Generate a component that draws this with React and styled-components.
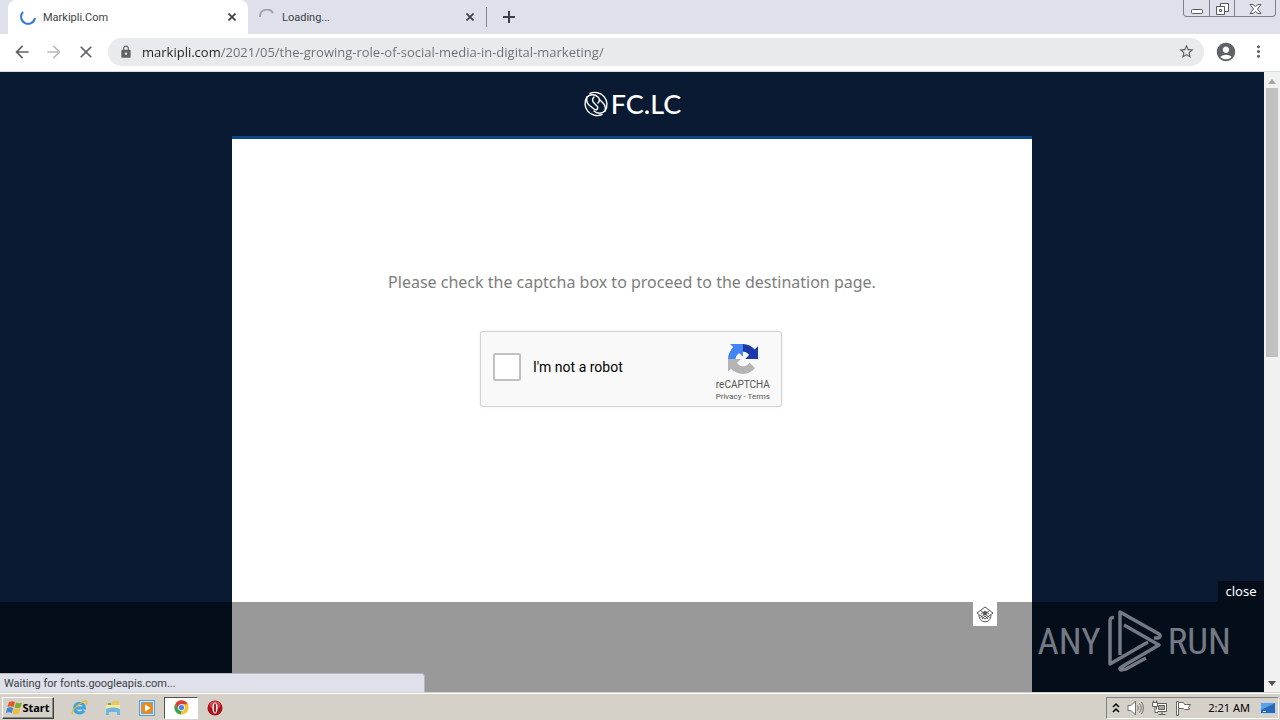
import styled, { createGlobalStyle } from 'styled-components'
import {
  MdAccountCircle,
  MdArrowBack,
  MdArrowForward,
  MdClose,
  MdLock,
  MdMoreVert,
  MdStarBorder,
} from 'react-icons/md'

const uiFont = '"Noto Sans", "Open Sans", sans-serif'
const chromeFont = 'Roboto, "Noto Sans", sans-serif'

const colors = {
  frame: '#dee1e9',
  navy: '#0b1a33',
  accent: '#0f4583',
  omnibox: '#e8eaed',
  icon: '#5f6368',
  taskbar: '#d5d0c8',
}

const GlobalStyle = createGlobalStyle`
  * {
    box-sizing: border-box;
  }
  body {
    margin: 0;
    font-family: ${uiFont};
  }
  button {
    display: flex;
    align-items: center;
    justify-content: center;
    padding: 0;
    border: 0;
    background: none;
    color: inherit;
    font: inherit;
  }
  svg {
    display: block;
    flex-shrink: 0;
  }
`

// window
const Desktop = styled.div`
  display: flex;
  flex-direction: column;
  height: 100vh;
  overflow: hidden;
`

const TabStrip = styled.div`
  display: flex;
  height: 34px;
  padding-left: 8px;
  background: ${colors.frame};
  color: #3c4043;
`

const Tab = styled.div`
  display: flex;
  align-items: center;
  gap: 7px;
  width: ${p => (p.$active ? 240 : 238)}px;
  padding: 0 10px 0 ${p => (p.$active ? 12 : 11)}px;
  border-radius: 8px 8px 0 0;
  background: ${p => (p.$active ? '#fff' : 'transparent')};
  font-family: ${chromeFont};
  font-size: 11px;
`

const TabTitle = styled.span`
  flex: 1;
`

const TabDivider = styled.div`
  width: 1px;
  height: 20px;
  margin: 7px 14px 0 0;
  background: #80858e;
`

const IconButton = styled.button`
  width: ${p => p.$size || 16}px;
  color: ${p => p.$color || colors.icon};
`

const WindowButtons = styled.div`
  display: flex;
  height: 17px;
  margin: 0 4px 0 auto;
  border: 1px solid #7d828c;
  border-top: 0;
  border-radius: 0 0 4px 4px;
`

const WindowButton = styled.button`
  width: ${p => p.$width}px;

  & + & {
    border-left: 1px solid #7d828c;
  }
`

// toolbar
const Toolbar = styled.div`
  display: flex;
  align-items: center;
  height: 38px;
  padding: 0 12px 2px;
  border-bottom: 1px solid #d9dcdf;
  background: #fff;
`

const NavButtons = styled.div`
  display: flex;
  gap: 12px;
  margin-right: 12px;
`

const Omnibox = styled.label`
  display: flex;
  flex: 1;
  align-items: center;
  gap: 9px;
  height: 28px;
  margin-right: 12px;
  padding: 0 10px 0 11px;
  border-radius: 14px;
  background: ${colors.omnibox};
  color: ${colors.icon};
`

const Address = styled.input`
  flex: 1;
  min-width: 0;
  padding: 0;
  border: 0;
  outline: 0;
  background: linear-gradient(90deg, #202124 78px, #6b6f74 78px);
  background-clip: text;
  color: transparent;
  font-family: "Open Sans", sans-serif;
  font-size: 13px;
`

const ToolbarEnd = styled.div`
  display: flex;
  gap: 12px;
`

// page
const Viewport = styled.div`
  position: relative;
  display: flex;
  flex: 1;
  min-height: 0;
  background: ${colors.navy};
`

const Page = styled.main`
  display: flex;
  flex: 1;
  flex-direction: column;
  align-items: center;
`

const Logo = styled.header`
  display: flex;
  align-items: center;
  gap: 2px;
  height: 64px;
  color: #fff;
  font-family: Lato, sans-serif;
  font-size: 27px;
  font-weight: 500;
  line-height: 30px;
`

const Card = styled.section`
  display: flex;
  flex: 1;
  flex-direction: column;
  align-items: center;
  gap: 37px;
  width: 100%;
  max-width: 800px;
  padding-top: 131px;
  border-top: 3px solid ${colors.accent};
  background: #fff;
`

const Message = styled.p`
  margin: 0;
  color: #7d7d7d;
  font-family: ${uiFont};
  font-size: 16px;
  line-height: 24px;
`

const Captcha = styled.div`
  display: flex;
  align-items: center;
  width: 302px;
  height: 76px;
  margin-right: 2px;
  padding: 0 11px 0 12px;
  border: 1px solid #d3d3d3;
  border-radius: 3px;
  background: #f9f9f9;
  box-shadow: 0 0 3px rgba(0, 0, 0, 0.08);
  font-family: Roboto, sans-serif;
`

const CheckLabel = styled.label`
  display: flex;
  flex: 1;
  align-items: center;
  gap: 12px;
  padding-bottom: 4px;
  color: #000;
  font-size: 14px;
`

const Checkbox = styled.input`
  width: 28px;
  height: 28px;
  margin: 0;
  appearance: none;
  border: 2px solid #c1c1c1;
  border-radius: 2px;
  background: #fff;
`

const CaptchaBrand = styled.div`
  display: flex;
  flex-direction: column;
  align-items: center;
  padding-top: 8px;
  color: #555;
  font-size: 10px;
  line-height: 12px;
`

const BrandName = styled.span`
  margin-top: 5px;
`

const Legal = styled.span`
  font-size: 8px;

  a {
    color: inherit;
    text-decoration: none;
  }
`

const Scrollbar = styled.div`
  display: flex;
  flex-direction: column;
  align-items: center;
  width: 16px;
  padding: 7px 0 6px;
  background: #f1f1f1;
`

const Thumb = styled.div`
  width: 12px;
  height: 269px;
  margin: 4px 0 auto;
  background: #c1c1c1;
`

const Arrow = styled.div`
  border: 4px solid transparent;
  border-top: 0;
  border-bottom: 5px solid #a3a3a3;
  ${p => p.$down && 'border-top: 5px solid #505050; border-bottom: 0;'}
`

// sticky ad over the page
const AdBar = styled.aside`
  position: absolute;
  right: 16px;
  bottom: 0;
  left: 0;
  height: 90px;
  background: rgba(0, 0, 0, 0.4);
`

const AdShade = styled.div`
  position: absolute;
  right: 0;
  bottom: 0;
  width: calc(50% - 400px);
  height: 100%;
  background: rgba(0, 6, 14, 0.25);
  ${p => p.$left && 'right: auto; left: 0;'}
`

const CloseAd = styled.button`
  && {
    position: absolute;
    right: 0;
    bottom: 100%;
    width: 46px;
    height: 21px;
    padding-bottom: 2px;
    background: #050d1b;
    color: #fff;
    font-size: 13px;
  }
`

const AdChoice = styled.div`
  position: absolute;
  top: 0;
  right: 267px;
  width: 24px;
  height: 24px;
  padding: 3px;
  background: #fff;
`

const Watermark = styled.div`
  position: absolute;
  top: 0;
  right: 33px;
  display: flex;
  align-items: center;
  gap: 6px;
  height: 78px;
  color: #747983;
  font-family: "Liberation Sans Narrow", "Roboto Condensed", sans-serif;
  font-size: 37px;
`

const Status = styled.div`
  position: absolute;
  bottom: 0;
  left: 0;
  width: 425px;
  height: 19px;
  padding-left: 4px;
  border: 1px solid #b5b8c0;
  border-width: 1px 1px 0 0;
  border-radius: 0 4px 0 0;
  background: ${colors.frame};
  color: #3c4043;
  font-family: ${chromeFont};
  font-size: 11px;
  line-height: 19px;
`

// taskbar
const Taskbar = styled.footer`
  display: flex;
  align-items: center;
  height: 28px;
  padding: 2px 1px 0 2px;
  border-top: 1px solid ${colors.taskbar};
  background: ${colors.taskbar};
  box-shadow: inset 0 1px #fff;
`

const StartButton = styled.button`
  && {
    width: 52px;
    height: 22px;
    margin-right: 8px;
    border: 1px solid;
    border-color: #fff #404040 #404040 #fff;
    box-shadow: inset -1px -1px #8a8781;
    color: #000;
    font-size: 11px;
    font-weight: 700;
  }
`

const TaskButton = styled.button`
  && {
    width: 34px;
    height: 22px;
    ${p => p.$active && `
      border: 1px solid;
      border-color: #55524e #fff #fff #55524e;
      background: #fff;
    `}
  }
`

const Tray = styled.div`
  display: flex;
  align-items: center;
  gap: 7px;
  height: 22px;
  margin-left: auto;
  padding: 0 2px 0 5px;
  border: 1px solid;
  border-color: #808080 #fff #fff #808080;
  font-size: 11px;
`

const Clock = styled.time`
  margin: 0 3px 0 9px;
`

const Spinner = ({ color, d }) => (
  <svg width="16" height="16" viewBox="0 0 16 16" fill="none" stroke={color} strokeWidth="2">
    <path d={d} />
  </svg>
)

const TabClose = () => (
  <IconButton $size={12} $color="#3c4043" aria-label="Close tab">
    <svg width="8" height="8" viewBox="0 0 8 8" stroke="currentColor" strokeWidth="1.700">
      <path d="M.5.5l7 7M7.500.5l-7 7" />
    </svg>
  </IconButton>
)

const Swirl = () => (
  <svg width="26" height="26" viewBox="0 0 26 26" fill="none" stroke="#fff" strokeWidth="1.400" strokeLinecap="round">
    <path d="M7 2.500A12 12 0 0 1 22 20M19 23.500A12 12 0 0 1 4 6" />
    <path d="M4 6c3-3 8-3 11 0 2 2 2 4 0 6M4 6c-1 4 0 6 2 8l5 4c3 2 5-1 3-3l-3-3c-2-2-2-4 0-6" />
    <path d="M22 20c-3 3-8 3-11 0M22 20c1-4 0-6-2-8l-3-3" />
  </svg>
)

const RecaptchaMark = () => (
  <svg width="30" height="30" viewBox="0 0 64 64">
    <path fill="#1c3aa9" d="M64 31.955l-.033-1.370V4.687l-7.160 7.160C50.948 4.674 42.033.093 32.050.093c-10.400 0-19.622 4.960-25.458 12.640l11.736 11.860a15.550 15.550 0 0 1 4.754-5.334c2.050-1.600 4.952-2.906 8.968-2.906.485 0 .86.057 1.135.163 4.976.393 9.288 3.140 11.828 7.124l-8.307 8.307L64 31.953" />
    <path fill="#4285f4" d="M31.862.094l-1.370.033H4.594l7.160 7.160C4.580 13.147 0 22.060 0 32.046c0 10.400 4.960 19.622 12.640 25.458L24.500 45.768a15.550 15.550 0 0 1-5.334-4.754c-1.600-2.050-2.906-4.952-2.906-8.968 0-.485.057-.86.163-1.135.393-4.976 3.140-9.288 7.124-11.828l8.307 8.307L31.860.095" />
    <path fill="#b4b4b4" d="M.001 32.045l.033 1.370v25.898l7.160-7.160c5.860 7.173 14.774 11.754 24.760 11.754 10.400 0 19.622-4.960 25.458-12.640l-11.736-11.860a15.550 15.550 0 0 1-4.754 5.334c-2.050 1.600-4.952 2.906-8.968 2.906-.485 0-.86-.057-1.135-.163-4.976-.393-9.288-3.140-11.828-7.124l8.307-8.307c-10.522.04-22.400.066-27.295-.005" />
  </svg>
)

const PlayMark = () => (
  <svg width="55" height="64" viewBox="0 0 55 64" fill="none" stroke="currentColor" strokeWidth="3.500" strokeLinejoin="round">
    <path d="M7 8.500H6a3 3 0 0 0-3 3V55l38-22" />
    <path d="M13 46V3l39 22c2 1.500 1 4-1 4h-4" />
    <path d="M17 16l35 20-36 21c-3 1.500-4 3-2 4l5-1 20-11" />
  </svg>
)

const AdMark = () => (
  <svg width="18" height="18" viewBox="0 0 18 18" fill="none" stroke="#555">
    <path d="M1 8l8-6 8 6-8 6zM3 10c0 9 12 9 12 0M4.500 5.500l9 7M13.500 5.500l-9 7M5 9l4-3 4 3M6 14l3-3 3 3" />
    <circle cx="9" cy="8.500" r="1.500" fill="#555" />
  </svg>
)

const WindowsFlag = () => (
  <svg width="16" height="16" viewBox="0 0 16 16">
    <path fill="#e4572a" d="M3 2c2-1 4-1 6 0L7.500 7c-2-1-4-1-6 0z" />
    <path fill="#7cae32" d="M10 2.500c2 1 4 1 6 0L14.500 7.500c-2 1-4 1-6 0z" />
    <path fill="#3e8ad6" d="M1.200 8c2-1 4-1 6 0L5.800 13c-2-1-4-1-6 0z" />
    <path fill="#f4b92c" d="M8.200 8.500c2 1 4 1 6 0L12.800 13.500c-2 1-4 1-6 0z" />
  </svg>
)

const ExplorerIcon = () => (
  <svg width="17" height="17" viewBox="0 0 17 17" fill="none">
    <path stroke="#3ba4e4" strokeWidth="3" d="M4 9h9.500c0-6.500-10-6.500-10 0 0 5.500 7 6.500 9.500 2.500" />
    <path stroke="#eab92e" strokeWidth="1.300" d="M2 15c-3-2 3-8 8-11 3-2 6-3 6-1 0 1-.5 2-1 3" />
  </svg>
)

const FolderIcon = () => (
  <svg width="16" height="16" viewBox="0 0 16 16">
    <path fill="#e9c95f" d="M2 3h5l1-2h6v9H2z" />
    <path fill="#fbe9a2" d="M1 5h14v6H1z" />
    <path fill="#6eb5df" d="M1 9c4-2 10-2 14 0v6h-3v-3H4v3H1z" />
    <path fill="#6dae5a" d="M3 3h3v2H3z" />
  </svg>
)

const MediaIcon = () => (
  <svg width="16" height="16" viewBox="0 0 16 16">
    <path fill="#5b9bd0" d="M0 0h16v16H0z" />
    <path fill="#d5e9f7" d="M1 1h14v14H1z" />
    <path fill="#69a6d4" d="M2 2h12v12H2z" />
    <circle cx="8" cy="8" r="6" fill="#f08a16" />
    <path fill="#fff" d="M6 4.500L11.500 8 6 11.500z" />
  </svg>
)

const ChromeIcon = () => (
  <svg width="15" height="15" viewBox="0 0 16 16">
    <circle cx="8" cy="8" r="7.500" fill="#fbc02d" />
    <path fill="#df3f32" d="M1.300 4.500A7.500 7.500 0 0 1 14.700 4.500H8L4.700 9.500z" />
    <path fill="#35a352" d="M1.300 4.500l3.500 5.500L8 11.500l-1 4A7.500 7.500 0 0 1 1.300 4.500z" />
    <circle cx="8" cy="8" r="3.600" fill="#fff" />
    <circle cx="8" cy="8" r="2.800" fill="#4285f4" />
  </svg>
)

const OperaIcon = () => (
  <svg width="16" height="16" viewBox="0 0 16 16">
    <circle cx="8" cy="8" r="7.500" fill="#ad1019" />
    <ellipse cx="8" cy="5" rx="5.500" ry="4" fill="#cf454c" />
    <ellipse cx="8" cy="8" rx="2.600" ry="5.500" fill="#fff" />
    <ellipse cx="8" cy="8" rx="1.200" ry="4.700" fill="#8a2a30" />
  </svg>
)

const TrayIcons = () => (
  <>
    <svg width="8" height="12" viewBox="0 0 8 12" fill="none" stroke="#000" strokeWidth="1.500">
      <path d="M1 5l3-3 3 3M1 10l3-3 3 3" />
    </svg>
    <svg width="17" height="16" viewBox="0 0 17 16" fill="none" stroke="#77746f">
      <path fill="#fff" d="M1 5.500h3L8.500 1v14L4 10.500H1z" />
      <path d="M10.500 5.500q2 2.500 0 5M12.500 3.500q3.500 4.500 0 9M14.500 2q4 6 0 12" />
    </svg>
    <svg width="17" height="16" viewBox="0 0 17 16" fill="none" stroke="#625f5b">
      <path fill="#fff" d="M5.500 3.500h10v8h-10zM7.500 14.500h7M11 11.500v3" />
      <path fill="#a8a7a3" d="M7.500 5.500h6v4h-6z" />
      <path fill="#fff" d="M1.500 2.500h5v4h-5zM2.500.5v2M5.500.5v2M4 6.500v6h3" />
    </svg>
    <svg width="17" height="16" viewBox="0 0 17 16" fill="#fff" stroke="#6d6a66">
      <path d="M1.500 1.500h2v14h-2zM3.500 2.500h5l1 2h6l-2 3 1 2h-5l-1-1h-5z" />
    </svg>
  </>
)

const App = () => {
  return (
    <Desktop>
      <GlobalStyle />
      <TabStrip>
        <Tab $active>
          <Spinner color="#3478dc" d="M3 3a7 7 0 1 0 12 6" />
          <TabTitle>Markipli.Com</TabTitle>
          <TabClose />
        </Tab>
        <Tab>
          <Spinner color="#a0a4ac" d="M1 8a7 7 0 0 1 13-4" />
          <TabTitle>Loading...</TabTitle>
          <TabClose />
        </Tab>
        <TabDivider />
        <IconButton aria-label="New tab" $color="#3c4043">
          <svg width="12" height="12" viewBox="0 0 12 12" stroke="currentColor" strokeWidth="2">
            <path d="M6 0v12M0 6h12" />
          </svg>
        </IconButton>
        <WindowButtons>
          <WindowButton $width={25} aria-label="Minimize">
            <svg width="12" height="15" viewBox="0 0 12 15" fill="#fff" stroke="#555963">
              <rect x="0.5" y="8.500" width="11" height="4" rx="1" />
            </svg>
          </WindowButton>
          <WindowButton $width={25} aria-label="Restore">
            <svg width="13" height="15" viewBox="0 0 13 15" fill="#fff" stroke="#555963">
              <path d="M4.500 2.500h8v8h-8z" />
              <path d="M.5 5.500h8v8h-8zM3.500 8.500h2v2h-2z" />
            </svg>
          </WindowButton>
          <WindowButton $width={41} aria-label="Close">
            <svg width="13" height="15" viewBox="0 0 13 15" fill="#fff" stroke="#555963">
              <path d="M1 3.500h3l2.500 2 2.500-2h3L8.500 8l3.500 4.500H9l-2.500-2-2.500 2H1L4.500 8z" />
            </svg>
          </WindowButton>
        </WindowButtons>
      </TabStrip>

      <Toolbar>
        <NavButtons>
          <IconButton $size={20} aria-label="Back"><MdArrowBack size={20} /></IconButton>
          <IconButton $size={20} $color="#babcbe" aria-label="Forward"><MdArrowForward size={20} /></IconButton>
          <IconButton $size={20} aria-label="Stop"><MdClose size={20} /></IconButton>
        </NavButtons>
        <Omnibox>
          <MdLock size={14} />
          <Address
            aria-label="Address"
            defaultValue="markipli.com/2021/05/the-growing-role-of-social-media-in-digital-marketing/"
          />
          <IconButton aria-label="Bookmark"><MdStarBorder size={17} /></IconButton>
        </Omnibox>
        <ToolbarEnd>
          <IconButton $size={20} aria-label="Profile"><MdAccountCircle size={22} /></IconButton>
          <IconButton $size={20} aria-label="Menu"><MdMoreVert size={19} /></IconButton>
        </ToolbarEnd>
      </Toolbar>

      <Viewport>
        <Page>
          <Logo><Swirl />FC.LC</Logo>
          <Card>
            <Message>Please check the captcha box to proceed to the destination page.</Message>
            <Captcha>
              <CheckLabel>
                <Checkbox type="checkbox" />
                I'm not a robot
              </CheckLabel>
              <CaptchaBrand>
                <RecaptchaMark />
                <BrandName>reCAPTCHA</BrandName>
                <Legal><a href="#privacy">Privacy</a> - <a href="#terms">Terms</a></Legal>
              </CaptchaBrand>
            </Captcha>
          </Card>
        </Page>
        <Scrollbar>
          <Arrow />
          <Thumb />
          <Arrow $down />
        </Scrollbar>
        <AdBar>
          <AdShade $left />
          <AdShade />
          <CloseAd>close</CloseAd>
          <AdChoice><AdMark /></AdChoice>
          <Watermark>
            <span>ANY</span>
            <PlayMark />
            <span>RUN</span>
          </Watermark>
        </AdBar>
        <Status>Waiting for fonts.googleapis.com...</Status>
      </Viewport>

      <Taskbar>
        <StartButton><WindowsFlag />Start</StartButton>
        <TaskButton aria-label="Internet Explorer"><ExplorerIcon /></TaskButton>
        <TaskButton aria-label="Explorer"><FolderIcon /></TaskButton>
        <TaskButton aria-label="Media Player"><MediaIcon /></TaskButton>
        <TaskButton $active aria-label="Chrome"><ChromeIcon /></TaskButton>
        <TaskButton aria-label="Opera"><OperaIcon /></TaskButton>
        <Tray>
          <TrayIcons />
          <Clock>2:21 AM</Clock>
          <svg width="16" height="16" viewBox="0 0 16 16">
            <path fill="#2868b8" stroke="#bdd2e8" d="M.5 2.500h15v11H.5z" />
            <path fill="#5da0e4" d="M1 3h14L1 10z" />
            <path fill="#e9f3fc" d="M3 11h3v1H3z" />
          </svg>
        </Tray>
      </Taskbar>
    </Desktop>
  )
}

export default App
